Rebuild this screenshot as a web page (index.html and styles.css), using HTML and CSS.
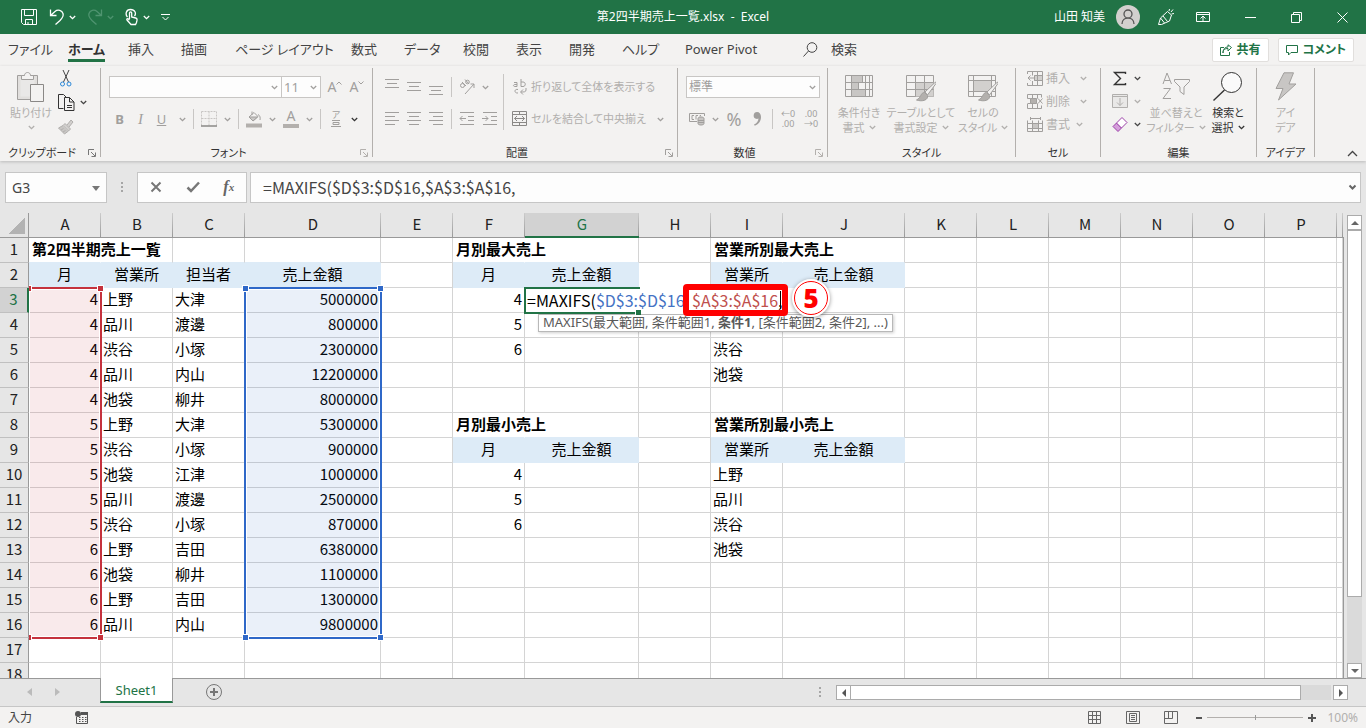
FILE: index.html
```
<!DOCTYPE html>
<html lang="ja">
<head>
	<meta charset="UTF-8">
	<title>第2四半期売上一覧.xlsx - Excel</title>
	<link rel="stylesheet" href="styles.css">
</head>
<body>
	<!-- 共通の矢印アイコン -->
	<svg class="defs" aria-hidden="true">
		<symbol id="chev" viewBox="0 0 7 5"><path d="M.8 1l2.7 2.7L6.2 1" fill="none" stroke="currentColor" stroke-width="1.3"/></symbol>
		<symbol id="launch" viewBox="0 0 8 8"><path d="M.5 6V.5H6M3 3l4 4M7.500 3.500v4h-4" fill="none" stroke="currentColor"/></symbol>
	</svg>

	<!-- タイトルバー -->
	<header class="titlebar">
		<div class="quick">
			<button class="btn" aria-label="上書き保存"><svg width="18" height="18" viewBox="0 0 18 18"><path d="M1.500 1.500h15v15h-13l-2-2zM4.500 1.500v6h9v-6M5.500 16.500v-5h7v5M8 14v2"/></svg></button>
			<button class="btn undo" aria-label="元に戻す"><svg width="16" height="18" viewBox="0 0 16 18" stroke-width="1.300"><path d="M1.500 1.500v6h6M1.500 7.500L6 3.500c3-2.500 7-1 8 2s-1 5-3 7l-4.500 4"/></svg><svg class="chev"><use href="#chev"/></svg></button>
			<button class="btn off" aria-label="やり直し" disabled><svg width="16" height="18" viewBox="0 0 16 18" stroke-width="1.300"><path d="M14.500 1.500v6h-6M14.500 7.500L10 3.500c-3-2.500-7-1-8 2s1 5 3 7l4.500 4"/></svg><svg class="chev"><use href="#chev"/></svg></button>
			<button class="btn" aria-label="タッチ/マウスモードの切り替え"><svg width="14" height="18" viewBox="0 0 14 18" stroke-width="1.300"><path d="M2.500 9C0 6.500 1 1.500 5.500 1.500s6 4 4 6.500M4.500 11V5c0-1.500 2.200-1.500 2.200 0v4l4 1c1.300.3 1.500 1 1.300 2.200l-.5 2.300-1 2H6L2 12c-.6-1 .6-1.800 1.400-1l1.100 1"/></svg><svg class="chev"><use href="#chev"/></svg></button>
			<button class="btn" aria-label="クイックアクセスのカスタマイズ"><svg width="9" height="8" viewBox="0 0 9 8"><path d="M0 1.500h9M1.500 4l3 3 3-3"/></svg></button>
		</div>
		<h1 class="doc">第2四半期売上一覧.xlsx&nbsp; -&nbsp; Excel</h1>
		<div class="winctl">
			<span class="user">山田 知美</span>
			<svg class="avatar" width="24" height="24" viewBox="0 0 24 24"><circle cx="12" cy="12" r="12" fill="#d2d0ce" stroke="none"/><path d="M6 19c0-8 12-8 12 0M16 9a4 4 0 1 1-8 0 4 4 0 0 1 8 0z" stroke="#555" stroke-width="1.300"/></svg>
			<button class="btn" aria-label="近日公開の機能"><svg width="18" height="18" viewBox="0 0 18 18"><path d="M10.500 3.500L3.500 10l-2 6.500h3l8-3.500 2-6zM3.500 10l4 5M6 8l4.500 5.500M12 3l.5-2M14 4l2-2.500M14.500 6l2.500-.5"/></svg></button>
			<button class="btn" aria-label="リボンの表示オプション"><svg width="14" height="12" viewBox="0 0 14 12"><path d="M.5 1.500h13v9H.5zM.5 3.500h13M7 10V5.500M4.500 7.500L7 5l2.500 2.500"/></svg></button>
			<button class="btn" aria-label="最小化"><svg width="11" height="11" viewBox="0 0 11 11"><path d="M0 5.500h11"/></svg></button>
			<button class="btn" aria-label="元に戻す（縮小）"><svg width="11" height="11" viewBox="0 0 11 11"><path d="M.5 2.500h8v8h-8zM2.500 2.500v-2h8v8h-2"/></svg></button>
			<button class="btn" aria-label="閉じる"><svg width="11" height="11" viewBox="0 0 11 11"><path d="M.5.5l10 10M10.500.5l-10 10"/></svg></button>
		</div>
	</header>

	<!-- リボンのタブ -->
	<nav class="tabs">
		<div class="tablist">
			<button class="btn tab">ファイル</button>
			<button class="btn tab on">ホーム</button>
			<button class="btn tab">挿入</button>
			<button class="btn tab">描画</button>
			<button class="btn tab">ページ レイアウト</button>
			<button class="btn tab">数式</button>
			<button class="btn tab">データ</button>
			<button class="btn tab">校閲</button>
			<button class="btn tab">表示</button>
			<button class="btn tab">開発</button>
			<button class="btn tab">ヘルプ</button>
			<button class="btn tab">Power Pivot</button>
			<button class="btn tab find"><svg width="15" height="15" viewBox="0 0 15 15"><circle cx="9" cy="5.500" r="4.800"/><path d="M5.500 9L.5 14.500"/></svg>検索</button>
		</div>
		<div class="share">
			<button class="btn card"><svg width="12" height="12" viewBox="0 0 12 12"><path d="M4 3.500H.5v8h9V8M3 9c0-3.500 2-4.500 5-4.500V7l3.500-3.500L8 .8V3C5 3 3 5 3 9z"/></svg>共有</button>
			<button class="btn card"><svg width="12" height="11" viewBox="0 0 12 11"><path d="M.5.5h11v7H5L2.500 10V7.500h-2z"/></svg>コメント</button>
		</div>
	</nav>

	<!-- リボン本体 -->
	<section class="ribbon">
		<div class="group clip">
			<div class="tools">
				<button class="btn big off"><svg width="28" height="30" viewBox="0 0 28 30"><path d="M.5 3.500h20v24H.5z" fill="#e1dfdd"/><path d="M3.500 6.500h14v18h-14z" fill="#e9e8e7" stroke="none"/><path d="M4.500 3.500h3c0-4 6-4 6 0h3v4h-12z" fill="#f3f2f1"/><path d="M13.500 12.500h13v17h-13z" fill="#f3f2f1" stroke="#8a8886"/></svg><span>貼り付け</span><svg class="chev"><use href="#chev"/></svg></button>
				<div class="col">
					<button class="btn" aria-label="切り取り"><svg width="16" height="17" viewBox="0 0 16 17"><path d="M5 0l5.500 12M11 0L5.500 12" stroke="#444"/><circle cx="4.500" cy="14" r="2" stroke="#2b88d8"/><circle cx="11" cy="14" r="2" stroke="#2b88d8"/></svg></button>
					<button class="btn" aria-label="コピー"><svg width="17" height="17" viewBox="0 0 17 17"><path d="M5.500 14.500h-5V.5h5l3 3" stroke="#333"/><path d="M6.500 3.500h5l4.500 4.500v8.500H6.500zM11.500 3.500V8H16M9 11.500h5M9 13.500h5" stroke="#333"/></svg><svg class="chev"><use href="#chev"/></svg></button>
					<button class="btn off" aria-label="書式のコピー"><svg width="16" height="16" viewBox="0 0 16 16"><path d="M9 6l4-5 2 2-4 5M7 4.500l5.500 5.500-2 2L5 6.500z" fill="#d2d0ce"/><path d="M5 6.500L.5 9l6 6L10.500 12M3 11l2.500-1.500M5 13l2.500-1.500" fill="#c8c6c4"/></svg></button>
				</div>
			</div>
			<div class="caption"><span>クリップボード</span><button class="btn launch" aria-label="クリップボードの詳細"><svg width="8" height="8"><use href="#launch"/></svg></button></div>
		</div>

		<div class="group font off">
			<div class="rows">
				<div class="row joined">
					<select class="combo name" aria-label="フォント"><option></option></select><select class="combo size" aria-label="フォント サイズ"><option>11</option></select>
					<button class="btn grow" aria-label="フォント サイズの拡大">A<svg width="6" height="4" viewBox="0 0 6 4"><path d="M.5 3.500L3 1l2.500 2.500"/></svg></button>
					<button class="btn grow" aria-label="フォント サイズの縮小">A<svg width="6" height="4" viewBox="0 0 6 4"><path d="M.5.5L3 3 5.500.5"/></svg></button>
				</div>
				<div class="row">
					<div class="biu"><button class="btn"><b>B</b></button><button class="btn"><i>I</i></button><button class="btn"><u>U</u></button></div>
					<svg class="chev"><use href="#chev"/></svg>
					<hr class="sep">
					<button class="btn" aria-label="罫線"><svg width="16" height="16" viewBox="0 0 16 16"><path d="M.5.5h15v14M.5.5v14M8 .5v14M.5 7.500h15" stroke="#c8c6c4" stroke-dasharray="2 1"/><path d="M0 15h16" stroke="#8a8886" stroke-width="1.500"/></svg></button>
					<svg class="chev"><use href="#chev"/></svg>
					<hr class="sep">
					<button class="btn" aria-label="塗りつぶしの色"><svg width="16" height="17" viewBox="0 0 16 17"><path d="M3 6l5-4.500L12 5.500 7 10zM6 4V.5M12 3.500c2 1 2.500 3 2 5.500"/><path d="M3 6h8.500L7 10z" fill="#c8c6c4"/><path d="M0 14.500h16" stroke="#b3b0ad" stroke-width="4"/></svg></button>
					<svg class="chev"><use href="#chev"/></svg>
					<button class="btn colour" aria-label="フォントの色">A</button>
					<svg class="chev"><use href="#chev"/></svg>
					<hr class="sep">
					<button class="btn ruby" aria-label="ふりがな"><span>ア</span><svg width="10" height="7" viewBox="0 0 10 7"><path d="M1 .5h8M2 2.500h6v2H2zM0 6.500h10"/></svg></button>
					<svg class="chev dark"><use href="#chev"/></svg>
				</div>
			</div>
			<div class="caption"><span>フォント</span><button class="btn launch" aria-label="フォントの詳細"><svg width="8" height="8"><use href="#launch"/></svg></button></div>
		</div>

		<div class="group align off">
			<div class="tools">
				<div class="rows first">
					<div class="row">
						<button class="btn" aria-label="上揃え"><svg width="15" height="20" viewBox="0 0 15 20"><path d="M0 2.500h14M2 6.500h10M0 10.500h14"/></svg></button>
						<button class="btn" aria-label="上下中央揃え"><svg width="15" height="20" viewBox="0 0 15 20"><path d="M0 5.500h14M2 9.500h10M0 13.500h14"/></svg></button>
						<button class="btn" aria-label="下揃え"><svg width="15" height="20" viewBox="0 0 15 20"><path d="M0 9.500h14M2 13.500h10M0 17.500h14"/></svg></button>
						<hr class="sep">
						<button class="btn" aria-label="方向"><svg width="16" height="16" viewBox="0 0 16 16"><circle cx="3.500" cy="6.500" r="2"/><path d="M3 3l4 4M6 .5l4 4.500"/><circle cx="8.500" cy="3" r="1.800"/><path d="M6 15l9-10M11.500 5H15v4"/></svg></button>
						<svg class="chev"><use href="#chev"/></svg>
					</div>
					<div class="row">
						<button class="btn" aria-label="左揃え"><svg width="15" height="16" viewBox="0 0 15 16"><path d="M0 1.500h14M0 5.500h10M0 9.500h14M0 13.500h10"/></svg></button>
						<button class="btn" aria-label="中央揃え"><svg width="15" height="16" viewBox="0 0 15 16"><path d="M0 1.500h14M2 5.500h10M0 9.500h14M2 13.500h10"/></svg></button>
						<button class="btn" aria-label="右揃え"><svg width="15" height="16" viewBox="0 0 15 16"><path d="M0 1.500h14M4 5.500h10M0 9.500h14M4 13.500h10"/></svg></button>
						<hr class="sep">
						<button class="btn" aria-label="インデントを減らす"><svg width="16" height="16" viewBox="0 0 16 16"><path d="M1 1.500h14M9 5.500h6M9 9.500h6M1 13.500h14M7 7.500H1M3.500 5L1 7.500 3.500 10"/></svg></button>
						<button class="btn" aria-label="インデントを増やす"><svg width="16" height="16" viewBox="0 0 16 16"><path d="M1 1.500h14M9 5.500h6M9 9.500h6M1 13.500h14M0 7.500h6M3.500 5L6 7.500 3.500 10"/></svg></button>
					</div>
				</div>
				<div class="rows second">
					<button class="btn row"><svg width="16" height="16" viewBox="0 0 16 16"><path d="M2 3.500h3v4H3c-2 0-2-2 0-2h2M9 0v7.500h2c3 0 3-4.500 0-4.500H9M6 10.500c-4-1-4 4 0 3.500M14 9v2c0 2-2 2-5 2M11 10.500L8.500 13l2.500 2.500"/></svg>折り返して全体を表示する</button>
					<button class="btn row"><svg width="16" height="16" viewBox="0 0 16 16"><path d="M.5.5h14v14H.5z" stroke="#8a8886"/><path d="M.5 3.500h14M.5 11.500h14M7.500.5v3M7.500 11.500v3M2.500 7.500h10M5 5L2.500 7.500 5 10M10 5l2.500 2.500L10 10" stroke="#8a8886"/></svg>セルを結合して中央揃え<svg class="chev far"><use href="#chev"/></svg></button>
				</div>
			</div>
			<div class="caption"><span>配置</span><button class="btn launch" aria-label="配置の詳細"><svg width="8" height="8"><use href="#launch"/></svg></button></div>
		</div>

		<div class="group number off">
			<div class="rows">
				<div class="row"><select class="combo fmt" aria-label="数値の書式"><option>標準</option></select></div>
				<div class="row inset">
					<button class="btn" aria-label="通貨表示形式"><svg width="16" height="14" viewBox="0 0 16 14"><path d="M15.500 4V1.500H.5v8H8M5 3.500H3v4h2M7 7.500v-4h2M12 3.500H11v1"/><path d="M9 6.500v5c0 2 6 2 6 0v-5c0-2-6-2-6 0zM9 8.500h6M9 10.500h6" fill="#c8c6c4"/></svg></button>
					<svg class="chev"><use href="#chev"/></svg>
					<button class="btn pct" aria-label="パーセント スタイル">%</button>
					<button class="btn" aria-label="桁区切りスタイル"><svg width="16" height="16" viewBox="0 0 16 16"><path d="M8 1a3.500 3.500 0 0 0-1 6.800c1 .2 2 0 2.500-.4C9.300 10 8 12 5 13.500l.8 1.200C10 13 12 10 12 6c0-3-1.500-5-4-5z" fill="#a19f9d" stroke="none"/></svg></button>
					<hr class="sep">
					<button class="btn dec" aria-label="小数点以下の表示桁数を増やす"><span>←0</span><span>.00</span></button>
					<button class="btn dec" aria-label="小数点以下の表示桁数を減らす"><span>.00</span><span>→0</span></button>
				</div>
			</div>
			<div class="caption"><span>数値</span><button class="btn launch" aria-label="数値の詳細"><svg width="8" height="8"><use href="#launch"/></svg></button></div>
		</div>

		<div class="group style off">
			<div class="tools">
				<button class="btn big"><svg width="30" height="30" viewBox="0 0 30 30"><path d="M1.500 3.500h27v21h-27z"/><path d="M7.500 3.500h11v7h-11zM7.500 17.500h14v7h-14zM7.500 10.500h7v7h-7z" fill="#c8c6c4"/><path d="M1.500 10.500h27M1.500 17.500h27M7.500 3.500v21M21.500 3.500v21M25.500 3.500v21"/></svg><span>条件付き</span><span>書式 <svg class="chev"><use href="#chev"/></svg></span></button>
				<button class="btn big"><svg width="30" height="30" viewBox="0 0 30 30"><path d="M.5 3.500h27v21H.5z"/><path d="M9.500 10.500h18v14h-18z" fill="#d2d0ce" stroke="none"/><path d="M.5 10.500h27M.5 17.500h27M9.500 3.500v21M18.500 3.500v21"/><path d="M29.500 10L19 20l2.500 3L30 11.500z" fill="#f3f2f1"/><path d="M18.500 20.500c-4 0-3 5-8 7.500 6 2 12 0 11-4.500z" fill="#b3b0ad"/></svg><span>テーブルとして</span><span>書式設定 <svg class="chev"><use href="#chev"/></svg></span></button>
				<button class="btn big"><svg width="30" height="30" viewBox="0 0 30 30"><path d="M.5 3.500h27v21H.5z"/><path d="M5.500 8.500h18v11h-18z" fill="#d2d0ce"/><path d="M.5 8.500h27M.5 19.500h27M5.500 3.500v21M23.500 3.500v21"/><path d="M29.500 10L19 20l2.500 3L30 11.500z" fill="#f3f2f1"/><path d="M18.500 20.500c-4 0-3 5-8 7.500 6 2 12 0 11-4.500z" fill="#b3b0ad"/></svg><span>セルの</span><span>スタイル <svg class="chev"><use href="#chev"/></svg></span></button>
			</div>
			<div class="caption"><span>スタイル</span></div>
		</div>

		<div class="group cells off">
			<div class="col">
				<button class="btn"><svg width="16" height="15" viewBox="0 0 16 15"><path d="M7.500 4.500h8v5h-8z" fill="#d2d0ce"/><path d="M.5 3V.5h15v14H.5V12M5.500.5v4M10.500.5v14M5.500 10v4.500M15.500 4.500h-8M7.500 9.500h8M7 7H1M3.500 4.500L1 7l2.500 2.500"/></svg>挿入<svg class="chev far"><use href="#chev"/></svg></button>
				<button class="btn"><svg width="16" height="15" viewBox="0 0 16 15"><path d="M3.500 4.500h6v5h-6z" fill="#b3b0ad"/><path d="M.5 4.500v-4h14v3M.5 10v4.500h14v-3M.5 4.500h3M.5 9.500h3M5.500.5v4M10.500.5v4M5.500 9.500v5M10.500 9.500v5M11 4.500l4.500 5M15.500 4.500l-4.500 5"/></svg>削除<svg class="chev far"><use href="#chev"/></svg></button>
				<button class="btn"><svg width="16" height="15" viewBox="0 0 16 15"><path d="M5.500 6.500h6v5h-6z" fill="#c8c6c4"/><path d="M.5 3.500v11h15v-11M.5 6.500h15M.5 11.500h15M5.500 3.500v11M11.500 3.500v11M3.500 0v3M13.500 0v3M3.500 1.500h10"/></svg>書式<svg class="chev near"><use href="#chev"/></svg></button>
			</div>
			<div class="caption"><span>セル</span></div>
		</div>

		<div class="group edit">
			<div class="tools">
				<div class="col">
					<button class="btn" aria-label="オート SUM"><svg width="16" height="15" viewBox="0 0 16 15"><path d="M13.500 3V1.500H2.500L8.500 7.500l-6 6h11V12" stroke="#333" stroke-width="1.400"/></svg><svg class="chev"><use href="#chev"/></svg></button>
					<button class="btn off" aria-label="フィル"><svg width="16" height="15" viewBox="0 0 16 15"><path d="M.5.5h15v13H.5z" fill="#e9e8e7"/><path d="M.5 2.500h15M8 4v7.500M5 8.500l3 3 3-3"/></svg><svg class="chev"><use href="#chev"/></svg></button>
					<button class="btn" aria-label="クリア"><svg width="16" height="15" viewBox="0 0 16 15"><path d="M1 9.500L4.500 6l5 5L6 14.500z" fill="#d59fdb" stroke="#9b3fa8"/><path d="M4.500 6L10 .5l5 5L9.500 11z" fill="#fff" stroke="#9b3fa8"/></svg><svg class="chev"><use href="#chev"/></svg></button>
				</div>
				<button class="btn big off sort"><svg width="28" height="30" viewBox="0 0 28 30"><path d="M1 12L5 1l4.500 11M2.500 8.500H8M1.500 16.500h7L1 26.500h8M12.500 7.500h15v2L22 15v7.500l-4-3V15l-5.500-5.500z"/></svg><span>並べ替えと</span><span>フィルター <svg class="chev"><use href="#chev"/></svg></span></button>
				<button class="btn big search"><svg width="30" height="30" viewBox="0 0 30 30"><circle cx="18.500" cy="10.500" r="10" fill="#fafafa" stroke="#333"/><path d="M11.500 18L.5 28.500" stroke="#333" stroke-width="1.400"/></svg><span>検索と</span><span>選択 <svg class="chev"><use href="#chev"/></svg></span></button>
			</div>
			<div class="caption"><span>編集</span></div>
		</div>

		<div class="group ideas">
			<div class="tools">
				<button class="btn big off"><svg width="24" height="30" viewBox="0 0 24 30"><path d="M10 .8h9.500L15 12h7L4.500 28l4.500-11.500H2z" fill="#c8c6c4"/></svg><span>アイ</span><span>デア</span></button>
			</div>
			<div class="caption"><span>アイデア</span></div>
		</div>
		<button class="btn fold" aria-label="リボンを折りたたむ"><svg width="11" height="7" viewBox="0 0 11 7"><path d="M1 6l4.500-4.500L10 6" stroke="#444" stroke-width="1.300"/></svg></button>
	</section>

	<!-- 数式バー -->
	<section class="formula">
		<div class="box namebox"><input type="text" value="G3" aria-label="名前ボックス"><svg width="8" height="5" viewBox="0 0 8 5"><path d="M0 0h8L4 5z" fill="#777"/></svg></div>
		<svg class="dots" width="2" height="10" viewBox="0 0 2 10"><path d="M0 0h2v2H0zM0 4h2v2H0zM0 8h2v2H0z" fill="#a6a6a6"/></svg>
		<div class="box fx">
			<button class="btn" aria-label="キャンセル"><svg width="12" height="12" viewBox="0 0 12 12"><path d="M1.500 1.500l9 9M10.500 1.500l-9 9" stroke="#777" stroke-width="2"/></svg></button>
			<button class="btn" aria-label="入力"><svg width="14" height="12" viewBox="0 0 14 12"><path d="M1.500 6.500L5 10l8-8.500" stroke="#777" stroke-width="2.500"/></svg></button>
			<button class="btn fn" aria-label="関数の挿入"><i>f</i><small>x</small></button>
		</div>
		<div class="box input"><input type="text" value="=MAXIFS($D$3:$D$16,$A$3:$A$16," aria-label="数式"><svg width="9" height="7" viewBox="0 0 9 7"><path d="M1.500 1.500l3 3 3-3" fill="none" stroke="#666" stroke-width="2"/></svg></div>
	</section>

	<!-- シート -->
	<main class="sheet">
		<div class="view"><table id="grid"></table></div>
		<div class="vscroll">
			<button class="btn arrow" aria-label="上へ"><svg width="8" height="4" viewBox="0 0 8 4"><path d="M0 4h8L4 0z" fill="#666"/></svg></button>
			<div class="thumb"></div>
			<button class="btn arrow" aria-label="下へ"><svg width="8" height="4" viewBox="0 0 8 4"><path d="M0 0h8L4 4z" fill="#666"/></svg></button>
		</div>
	</main>

	<!-- シート見出し -->
	<section class="sheets">
		<button class="btn nav" aria-label="前のシート"><svg width="5" height="8" viewBox="0 0 5 8"><path d="M5 0v8L0 4z" fill="#bbb"/></svg></button>
		<button class="btn nav" aria-label="次のシート"><svg width="5" height="8" viewBox="0 0 5 8"><path d="M0 0v8l5-4z" fill="#bbb"/></svg></button>
		<button class="btn sheettab">Sheet1</button>
		<button class="btn add" aria-label="新しいシート"><svg width="16" height="16" viewBox="0 0 16 16"><circle cx="8" cy="8" r="7.500" fill="none" stroke="#777"/><path d="M8 4v8M4 8h8" stroke="#777" stroke-width="2"/></svg></button>
		<svg class="dots" width="2" height="10" viewBox="0 0 2 10"><path d="M0 0h2v2H0zM0 4h2v2H0zM0 8h2v2H0z" fill="#a6a6a6"/></svg>
		<div class="hscroll">
			<button class="btn arrow" aria-label="左へ"><svg width="4" height="8" viewBox="0 0 4 8"><path d="M4 0v8L0 4z" fill="#555"/></svg></button>
			<div class="thumb"></div>
			<button class="btn arrow" aria-label="右へ"><svg width="4" height="8" viewBox="0 0 4 8"><path d="M0 0v8l4-4z" fill="#555"/></svg></button>
		</div>
	</section>

	<!-- ステータスバー -->
	<footer class="status">
		<span class="mode">入力</span>
		<button class="btn" aria-label="マクロの記録"><svg width="14" height="13" viewBox="0 0 14 13"><path d="M1.500 6v6.500h11v-11H6" stroke="#555"/><path d="M6 1h7v3H6z" fill="#555" stroke="none"/><circle cx="3" cy="3" r="3" fill="#555" stroke="none"/><path d="M4 6.500h1.500M7 6.500h1.500M10 6.500h1.500M4 8.500h1.500M7 8.500h1.500M10 8.500h1.500M4 10.500h1.500M7 10.500h1.500M10 10.500h1.500" stroke="#555"/></svg></button>
		<div class="views">
			<button class="btn" aria-label="標準"><svg width="14" height="13" viewBox="0 0 14 13"><path d="M.5.5h12v12H.5zM4.500.5v12M8.500.5v12M.5 4.500h12M.5 8.500h12"/></svg></button>
			<button class="btn" aria-label="ページ レイアウト"><svg width="14" height="13" viewBox="0 0 14 13"><path d="M.5.5h13v12H.5zM3.500 2.500h7v8h-7zM5 4.500h4M5 6.500h4M5 8.500h4"/></svg></button>
			<button class="btn" aria-label="改ページ プレビュー"><svg width="14" height="13" viewBox="0 0 14 13"><path d="M.5.5h13v12H.5zM.5 7.500h8v-7M4.500.5v7"/></svg></button>
		</div>
		<div class="zoom">
			<button class="btn" aria-label="縮小"><svg width="6" height="8" viewBox="0 0 6 8"><path d="M0 4h6" stroke-width="2"/></svg></button>
			<input type="range" min="10" max="190" value="100" aria-label="ズーム">
			<button class="btn" aria-label="拡大"><svg width="8" height="8" viewBox="0 0 8 8"><path d="M0 4h8M4 0v8" stroke-width="2"/></svg></button>
			<span class="pct100">100%</span>
		</div>
	</footer>
	<script src="script.js"></script>
</body>
</html>
```
FILE: styles.css
```
*{margin:0;padding:0;box-sizing:border-box;}
body{display:flex;flex-direction:column;height:100vh;overflow:hidden;background:#e6e6e6;color:#444;font:12px/16px "Noto Sans","Noto Sans CJK JP",sans-serif;font-feature-settings:"palt";}
svg{display:block;flex:none;}
.defs{position:absolute;width:0;height:0;}
.btn,input,select{font:inherit;font-feature-settings:inherit;color:inherit;border:0;background:none;}
.btn{display:flex;align-items:center;justify-content:center;white-space:nowrap;}
.btn svg{fill:none;stroke:currentColor;}
.chev{width:7px;height:5px;stroke:none;}
.btn .chev{stroke:none;}
.off{color:#b1afad;}

/* タイトルバー */
.titlebar{flex:none;display:grid;grid-template-columns:1fr auto 1fr;align-items:center;height:34px;background:#217346;color:#fff;}
.quick{display:flex;align-items:center;gap:11px;padding-left:20px;}
.quick .btn{gap:4px;}
.quick .off{color:#4f9470;}
.doc{font-size:12px;font-weight:400;}
.winctl{display:flex;align-items:center;justify-content:flex-end;padding-right:18px;gap:35px;}
.winctl .user{margin-right:-24px;}
.winctl .avatar{fill:none;margin-right:-18px;}
.winctl .avatar + .btn{margin-right:-14px;}

/* タブ */
.tabs{flex:none;display:flex;justify-content:space-between;height:32px;padding:0 12px 0 8px;background:#f3f2f1;}
.tablist{display:grid;grid-template-columns:60px 60px 53px 54px 116px 53px 59px 53px 53px 53px 63px 118px auto;}
.tab{justify-content:flex-start;justify-self:start;height:28px;padding-top:2px;font-size:13px;}
.tab.on{font-weight:700;border-bottom:3px solid #217346;padding-top:5px;color:#333;}
.find{gap:13px;}
.share{display:flex;align-items:center;gap:9px;}
.card{height:24px;padding:0 7px;gap:5px;border:1px solid #e1dfdd;border-radius:2px;background:#fff;color:#217346;font-weight:700;}

/* リボン */
.ribbon{position:relative;z-index:1;flex:none;display:flex;height:95px;padding:2px 0 4px;background:#f3f2f1;box-shadow:0 1px 3px #bbb;}
.group{display:flex;flex-direction:column;justify-content:space-between;border-right:1px solid #b3b0ad;}
.caption{display:flex;height:14px;margin-bottom:-3px;font-size:11px;line-height:14px;color:#333;}
.caption span{flex:1;text-align:center;}
.launch{width:16px;color:#777;}
.font .launch,.align .launch,.number .launch{color:#b3b0ad;}
.tools{display:flex;}
.rows{display:flex;flex-direction:column;gap:10px;padding:8px 0 0 8px;}
.row{display:flex;align-items:center;gap:7px;height:22px;}
.row .btn,.align svg{color:#a19f9d;}
.row .chev{color:#a19f9d;}
.row .dark{color:#333;}
.sep{width:1px;height:20px;border:0;background:#c8c6c4;}
.big{flex-direction:column;font-size:11px;line-height:15px;padding-top:4px;}
.big > svg:first-child{margin-bottom:3px;color:#a19f9d;}
.big > .chev{margin-top:5px;}
.big span{display:flex;align-items:center;gap:4px;}
.col{display:flex;flex-direction:column;gap:8px;padding-top:3px;}
.col .btn{justify-content:flex-start;height:15px;gap:8px;}

.clip{width:101px;}
.clip .tools{padding-left:6px;}
.clip .big{width:50px;justify-content:flex-start;}
.clip .col{gap:9px;padding-left:2px;}
.clip .col .btn{gap:5px;}

.font{width:272px;}
.combo{appearance:none;height:22px;padding:0 4px;border:1px solid #c8c6c4;border-radius:0;color:#a19f9d;background:#fdfdfd url("data:image/svg+xml,%3Csvg xmlns='http://www.w3.org/2000/svg' width='7' height='5'%3E%3Cpath d='M.8 1l2.700 2.700L6.200 1' fill='none' stroke='%23a19f9d' stroke-width='1.300'/%3E%3C/svg%3E") no-repeat right 3px center;}
.joined{gap:0;}
.combo.name{width:173px;}
.combo.size{width:40px;margin-left:-1px;padding:0 2px;font-size:13px;}
.grow{width:22px;font-size:14px;}
.joined .grow:nth-of-type(1){margin-left:3px;}
.grow svg{align-self:flex-start;margin-top:2px;}
.biu{display:flex;font-size:13px;}
.biu .btn{width:21px;}
.biu i{font-family:"Liberation Serif",serif;font-size:15px;}
.colour{width:16px;height:17px;padding-bottom:3px;border-bottom:4px solid #b3b0ad;font-size:14px;line-height:12px;}
.ruby{flex-direction:column;width:16px;gap:1px;font-size:9px;line-height:8px;}

.align{width:305px;}
.align .first{width:130px;padding-left:12px;}
.align .second{padding-left:9px;background:linear-gradient(#c8c6c4,#c8c6c4) no-repeat 0 6px/1px 58px;}
.align .second .row{justify-content:flex-start;gap:3px;color:#b1afad;font-size:11px;}
.align .far{margin-left:8px;}

.number{width:150px;}
.combo.fmt{width:134px;padding:0 2px;}
.inset{padding-left:3px;}
.pct{width:16px;font-size:18px;}
.dec{flex-direction:column;width:16px;font-size:9px;line-height:10px;}

.style{width:188px;}
.style .big{width:62px;}
.cells{width:85px;}
.cells .col{padding-left:11px;}
.cells .btn{gap:3px;}
.cells .btn svg:first-child{color:#a19f9d;}
.cells .far{margin-left:7px;}
.cells .near{margin-left:3px;}
.edit{width:156px;}
.edit .col{width:43px;padding-left:11px;}
.edit .col .btn{gap:6px;}
.sort{width:64px;}
.search{width:40px;color:#333;}
.ideas{width:58px;}
.ideas .big{width:57px;}
.fold{margin:0 8px 0 auto;align-self:flex-end;}

/* 数式バー */
.formula{flex:none;display:flex;align-items:center;height:52px;padding:0 5px;}
.box{display:flex;align-items:center;height:31px;border:1px solid #c6c6c6;background:#fdfdfd;}
.box input{flex:1;min-width:0;outline:0;}
.namebox{width:102px;padding:2px 6px 0;font-size:14px;}
.formula .dots{margin:0 14px;}
.fx{width:110px;justify-content:space-around;}
.fn{font:italic 700 16px/16px "Liberation Serif",serif;color:#666;}
.fn small{font-size:11px;align-self:flex-end;}
.input{flex:1;margin-left:3px;padding:0 3px 0 12px;font:16px/20px "Noto Sans CJK JP",sans-serif;font-feature-settings:normal;}

/* シート */
.sheet{flex:1;min-height:0;display:flex;border-bottom:1px solid #999;}
.view{flex:1;min-width:0;overflow:hidden;padding-right:1px;background:linear-gradient(#999,#999) no-repeat right 24px/1px 100%;}
#grid{table-layout:fixed;width:100%;border-collapse:separate;border-spacing:0;background:#fff;color:#000;font:15px/20px "Noto Sans CJK JP",sans-serif;font-feature-settings:normal;}
#grid th,#grid td{height:25px;border:solid #d4d4d4;border-width:0 1px 1px 0;padding:0 2px 2px;line-height:20px;white-space:nowrap;text-align:left;}
#grid th{padding:0 0 2px;background:#e6e6e6;font-weight:400;text-align:center;color:#222;}
#grid thead th{border-bottom-color:#999;border-right:0;background:linear-gradient(#ccc,#999) no-repeat right/1px 100% #e6e6e6;}
#grid tbody th{border-right-color:#999;border-bottom-color:#c0c0c0;}
#grid thead th.on{background-color:#d2d2d2;border-bottom:2px solid #217346;padding-bottom:1px;color:#217346;}
#grid tbody th.on{background:#d2d2d2;border-right:2px solid #217346;color:#217346;}
#grid .corner{background:linear-gradient(135deg,transparent 50%,#b3b3b3 50%) no-repeat 8px 4px/17px 17px #e6e6e6;border-right:1px solid #999;}
#grid td.head{background:#ddebf7;border-color:#ddebf7;text-align:center;}
#grid td.above{border-bottom-color:#ddebf7;}
#grid td.title{padding-left:3px;border-right-color:#fff;font-weight:700;overflow:visible;}
#grid td.num{text-align:right;}
#grid td.anchor{position:relative;}

/* 参照範囲の枠 */
.range{position:absolute;z-index:2;top:-1px;left:-1px;right:-2px;height:352px;border:2px solid;box-shadow:inset 0 0 0 1px #fff;}
.red{left:0;border-color:#c5323d;border-left:0;background:rgba(197,50,61,.1);}
.blue{border-color:#2f68c8;background:rgba(47,104,200,.1);}
.range i{position:absolute;width:7px;height:7px;border:1px solid #fff;background:#2f68c8;}
.red i{background:#c5323d;}
.range i:nth-child(1){top:-4px;left:-4px;}
.range i:nth-child(2){top:-4px;right:-4px;}
.range i:nth-child(3){bottom:-4px;left:-4px;}
.range i:nth-child(4){bottom:-4px;right:-4px;}
.red i:nth-child(odd){left:0;width:3px;border-left:0;}

/* 編集中のセル */
.editor{position:absolute;z-index:3;top:-1px;left:-1px;display:flex;align-items:center;height:27px;width:258px;padding:0 0 2px 3px;background:#fff;font-size:16px;}
.editor .frame{position:absolute;top:0;left:0;width:116px;height:27px;border:2px solid #217346;border-right:0;}
.editor .frame::after{content:"";position:absolute;right:-1px;bottom:-3px;width:5px;height:5px;border:1px solid #fff;border-width:0 0 0 1px;background:#217346;}
.editor .d{color:#4472c4;}
.editor .a{padding-left:3px;color:#c0504d;}
.editor .mark{position:absolute;top:-3px;left:159px;width:105px;height:32px;border:6px solid #f00;border-radius:4px;}
.editor .mark::after{content:"";position:absolute;top:1px;right:1px;width:1px;height:18px;background:#000;}
.editor .no{position:absolute;top:-8px;left:268px;width:38px;height:38px;border:2px solid #fff;border-radius:50%;background:#fff;box-shadow:0 1px 4px rgba(0,0,0,.4);}
.editor .no b{display:block;height:34px;border:1px solid #f00;border-radius:50%;color:#f00;text-align:center;font:800 26px/32px "Open Sans",sans-serif;}
.tip{position:absolute;z-index:2;top:26px;left:13px;height:18px;padding:0 4px;border:1px solid #b8b8b8;background:#fff;color:#595959;box-shadow:1px 1px 3px rgba(0,0,0,.2);font:13px/15px "Noto Sans","Noto Sans CJK JP",sans-serif;}

/* スクロールバー */
.arrow{flex:none;width:15px;height:15px;border:1px solid #ababab;background:#fff;}
.arrow svg{stroke:none;}
.thumb{background:#fff;border:1px solid #ababab;}
.vscroll{flex:none;display:flex;flex-direction:column;width:22px;padding:2px 4px 0 3px;}
.vscroll .thumb{flex:1;margin-bottom:66px;box-shadow:0 66px #dadada;}

/* シート見出し */
.sheets{flex:none;display:flex;height:28px;padding-right:18px;border-bottom:1px solid #c6c6c6;}
.nav{width:28px;height:25px;}
.nav:first-child{margin-left:15px;}
.sheets .btn svg{stroke:none;}
.sheettab{width:73px;height:25px;margin:-1px 0 0 29px;border:1px solid #999;border-width:0 1px 2px;border-bottom-color:#217346;background:#fff;color:#217346;font-size:13px;}
.add{height:25px;margin-left:33px;}
.sheets .dots{margin:8px 15px 0 auto;}
.hscroll{display:flex;width:39%;max-width:512px;padding-top:6px;}
.hscroll .thumb{flex:1;height:15px;margin:0 32px 0 -1px;box-shadow:30px 0 #dadada;}

/* ステータスバー */
.status{flex:none;display:flex;align-items:center;height:21px;padding:0 8px;background:#f3f2f1;}
.mode{width:67px;}
.views{display:flex;gap:24px;margin-left:auto;color:#666;}
.zoom{display:flex;align-items:center;gap:5px;margin-left:18px;color:#555;}
.zoom input{appearance:none;width:96px;height:9px;background:linear-gradient(#b3b0ad,#b3b0ad) no-repeat center/100% 1px;}
.zoom input::-webkit-slider-thumb{appearance:none;width:1px;height:5px;background:#999;}
.pct100{margin-left:6px;color:#b1afad;}
```
FILE: script.js
```
// 列の幅（最後の列は残り全部）
var cols = {A:72,B:72,C:72,D:136,E:72,F:72,G:114,H:72,I:72,J:122,K:72,L:72,M:72,N:72,O:72,P:72,Q:""};
var names = Object.keys(cols);
var sales = [
	[4,"上野","大津",5000000],
	[4,"品川","渡邊",800000],
	[4,"渋谷","小塚",2300000],
	[4,"品川","内山",12200000],
	[4,"池袋","柳井",8000000],
	[5,"上野","大津",5300000],
	[5,"渋谷","小塚",900000],
	[5,"池袋","江津",1000000],
	[5,"品川","渡邊",2500000],
	[5,"渋谷","小塚",870000],
	[6,"上野","吉田",6380000],
	[6,"池袋","柳井",1100000],
	[6,"上野","吉田",1300000],
	[6,"品川","内山",9800000]
];
var cells = {
	A1:"第2四半期売上一覧", F1:"月別最大売上", I1:"営業所別最大売上", F8:"月別最小売上", I8:"営業所別最小売上",
	A2:"月", B2:"営業所", C2:"担当者", D2:"売上金額",
	I5:"渋谷", I6:"池袋", I10:"上野", I11:"品川", I12:"渋谷", I13:"池袋"
};
var kinds = {A1:"title", F1:"title", I1:"title", F8:"title", I8:"title", A3:"anchor", D3:"anchor", G3:"anchor"};

for(var i=0;i<sales.length;i++){
	cells["A"+(i+3)] = sales[i][0];
	cells["B"+(i+3)] = sales[i][1];
	cells["C"+(i+3)] = sales[i][2];
	cells["D"+(i+3)] = sales[i][3];
}
// 右側の集計表（上が最大、下が最小）
[2,9].forEach(function(r){
	cells["F"+r] = "月";
	cells["G"+r] = "売上金額";
	cells["I"+r] = "営業所";
	cells["J"+r] = "売上金額";
	for(var i=0;i<3;i++){ cells["F"+(r+1+i)] = i+4; }
});

function isHead(c, r){
	return (r==2 && "ABCDFGIJ".indexOf(c)>=0) || (r==9 && "FGIJ".indexOf(c)>=0);
}

var handles = "<i></i><i></i><i></i><i></i>";
var extra = {
	A3:'<div class="range red">'+handles+'</div>',
	D3:'<div class="range blue">'+handles+'</div>',
	G3:'<div class="tip">MAXIFS(最大範囲, 条件範囲1, <b>条件1</b>, [条件範囲2, 条件2], ...)</div>'+
		'<div class="editor"><span class="frame"></span>=MAXIFS(<span class="d">$D$3:$D$16</span>,<span class="a">$A$3:$A$16</span>,'+
		'<span class="mark"></span><span class="no"><b>5</b></span></div>'
};

var html = '<colgroup><col style="width:29px">';
names.forEach(function(c){
	html += cols[c] ? '<col style="width:'+cols[c]+'px">' : '<col>';
});
html += '</colgroup><thead><tr><th class="corner"></th>';
names.forEach(function(c){
	html += '<th'+(c=="G" ? ' class="on"' : '')+'>'+(c=="Q" ? "" : c)+'</th>';
});
html += '</tr></thead><tbody>';
for(var r=1;r<=18;r++){
	html += '<tr><th'+(r==3 ? ' class="on"' : '')+'>'+r+'</th>';
	names.forEach(function(c){
		var id = c+r, v = cells[id], cls = [];
		if(kinds[id]){ cls.push(kinds[id]); }
		if(isHead(c, r)){ cls.push("head"); }
		if(isHead(c, r+1)){ cls.push("above"); }
		if(typeof v=="number"){ cls.push("num"); }
		html += '<td class="'+cls.join(" ")+'">'+(v===undefined ? "" : v)+(extra[id] || "")+'</td>';
	});
	html += '</tr>';
}
document.getElementById("grid").innerHTML = html+'</tbody>';
```
